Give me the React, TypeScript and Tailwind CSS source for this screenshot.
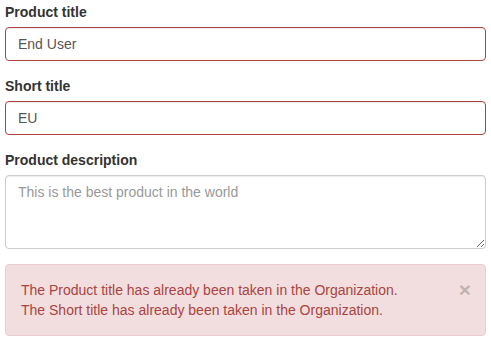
import React from "react";

export default function App() {
  const font = { fontFamily: '"Liberation Sans", Arial, sans-serif' };
  return (
    <div className="bg-white px-[5px] pt-[2px] text-[14px] leading-[20px] text-[#333]" style={font}>
      <div className="mb-[15px]">
        <label className="block mb-[5px] font-bold">Product title</label>
        <input
          className="block w-full h-[34px] px-[12px] py-[6px] border border-[#a94442] rounded-[4px] text-[#555] shadow-[inset_0_1px_1px_rgba(0,0,0,0.075)] outline-none"
          defaultValue="End User"
          style={font}
        />
      </div>
      <div className="mb-[15px]">
        <label className="block mb-[5px] font-bold">Short title</label>
        <input
          className="block w-full h-[34px] px-[12px] py-[6px] border border-[#a94442] rounded-[4px] text-[#555] shadow-[inset_0_1px_1px_rgba(0,0,0,0.075)] outline-none"
          defaultValue="EU"
          style={font}
        />
      </div>
      <div className="mb-[15px]">
        <label className="block mb-[5px] font-bold">Product description</label>
        <textarea
          rows={3}
          className="block w-full h-[74px] px-[12px] py-[6px] border border-[#ccc] rounded-[4px] text-[#555] placeholder:text-[#999] shadow-[inset_0_1px_1px_rgba(0,0,0,0.075)] outline-none resize-y"
          placeholder="This is the best product in the world"
          style={font}
        />
      </div>
      <div className="relative border border-[#ebccd1] bg-[#f2dede] rounded-[4px] py-[15px] pl-[15px] pr-[35px] text-[#a94442]">
        <button
          className="absolute right-[14px] top-[14px] text-[21px] leading-none font-bold text-black opacity-20 [text-shadow:0_1px_0_#fff]"
          style={font}
        >
          ×
        </button>
        <div>The Product title has already been taken in the Organization.</div>
        <div>The Short title has already been taken in the Organization.</div>
      </div>
    </div>
  );
}
